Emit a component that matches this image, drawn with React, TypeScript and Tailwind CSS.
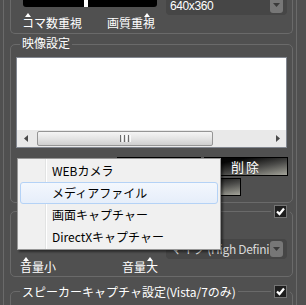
import React from "react";

const line = "border-[#6a6a6a]";

function Tri({ className = "" }: { className?: string }) {
  return (
    <svg width="6" height="4" viewBox="0 0 6 4" className={className}>
      <path d="M3 0 L6 4 L0 4 Z" fill="#fff" />
    </svg>
  );
}

function DownArrow() {
  return (
    <svg width="7" height="4" viewBox="0 0 7 4">
      <path d="M0 0 H7 L3.5 4 Z" fill="#3a3a3a" />
    </svg>
  );
}

function CheckBox() {
  return (
    <div className="w-[13px] h-[13px] border border-[#747474] bg-[#1e1e1e] flex items-center justify-center">
      <svg width="11" height="11" viewBox="0 0 11 11">
        <path d="M2 5.5 L4.5 8 L9 2.5" stroke="#fff" strokeWidth="2.2" fill="none" />
      </svg>
    </div>
  );
}

function GroupHeader({ label, check }: { label?: string; check?: boolean }) {
  return (
    <div className="-mt-[7px] flex items-center h-[13px]">
      {label && <span className="ml-[9px] px-[2px] bg-[#505050] leading-[12px]">{label}</span>}
      {check && (
        <div className="ml-auto mr-[2px] px-[3px] bg-[#505050]">
          <CheckBox />
        </div>
      )}
    </div>
  );
}

function DarkButton({ children, className = "" }: { children?: React.ReactNode; className?: string }) {
  return (
    <div
      className={`border border-black bg-[linear-gradient(to_bottom_right,#060606_25%,#4a4a48_60%,#a4a49a)] flex items-center justify-center text-[13px] tracking-[2px] text-white ${className}`}
    >
      {children}
    </div>
  );
}

function ScrollArrow({ dir }: { dir: "l" | "r" }) {
  return (
    <div className="w-[17px] flex items-center justify-center">
      <svg width="4" height="7" viewBox="0 0 4 7">
        <path d={dir === "l" ? "M4 0 V7 L0 3.5 Z" : "M0 0 V7 L4 3.5 Z"} fill="#4a4a4a" />
      </svg>
    </div>
  );
}

const items = ["WEBカメラ", "メディアファイル", "画面キャプチャー", "DirectXキャプチャー"];

export default function App() {
  return (
    <div className="relative w-[306px] h-[305px] overflow-hidden bg-[#505050] text-white text-[12px] leading-[12px] font-['Noto_Sans_CJK_JP',sans-serif]">
      <div className={`ml-[3px] w-[294px] h-full border-x ${line} pl-[6px] pr-[3px] flex flex-col`}>
        {/* 解像度・フレーム */}
        <div className={`border-x border-b ${line} rounded-b-[5px] pb-[4px] flex`}>
          <div className="flex flex-col">
            <div className="ml-[12px] w-[134px] h-[7px] bg-black rounded-b-[3px] flex">
              <div className="ml-[61px] w-[4px] h-[7px] bg-white" />
            </div>
            <div className="mt-[6px] flex">
              <div className="ml-[11px] w-[60px] flex flex-col">
                <Tri className="ml-[3px]" />
                <span>コマ数重視</span>
              </div>
              <div className="ml-[25px] flex flex-col">
                <Tri className="ml-[37px]" />
                <span>画質重視</span>
              </div>
            </div>
          </div>
          <div className="ml-auto mr-[5px] w-[121px] h-[15px] rounded-b-[4px] bg-[#464646] flex items-start">
            <span className="pl-[4px] pt-[1px] text-[12px] leading-[10px] tracking-[-0.4px] font-['Liberation_Sans',sans-serif]">
              640x360
            </span>
            <div className="ml-auto mr-[4px] w-[13px] h-[13px] rounded-b-[3px] bg-[#777] flex justify-center pt-[3px]">
              <DownArrow />
            </div>
          </div>
        </div>

        {/* 映像設定 */}
        <div className={`mt-[10px] border ${line} rounded-[5px] pb-[6px]`}>
          <div className="-mt-[8px] flex">
            <span className="ml-[9px] px-[2px] bg-[#505050] leading-[12px]">映像設定</span>
          </div>
          <div className="ml-[5px] mt-[8px] w-[271px] h-[91px] border border-[#828790] bg-white flex flex-col">
            <div className="flex-1" />
            <div className="h-[17px] bg-[#e9e9e9] flex">
              <ScrollArrow dir="l" />
              <div className="w-[3px]" />
              <div className="w-[176px] my-[1px] rounded-[2px] border border-[#959595] bg-[linear-gradient(to_bottom,#f5f5f5,#e4e4e4_50%,#cfcfcf)] flex items-center justify-center gap-[1px]">
                <div className="w-[1px] h-[7px] bg-[#6a6a6a]" />
                <div className="w-[1px] h-[7px] bg-[#fafafa]" />
                <div className="w-[1px] h-[7px] bg-[#6a6a6a]" />
                <div className="w-[1px] h-[7px] bg-[#fafafa]" />
                <div className="w-[1px] h-[7px] bg-[#6a6a6a]" />
                <div className="w-[1px] h-[7px] bg-[#fafafa]" />
              </div>
              <div className="flex-1" />
              <ScrollArrow dir="r" />
            </div>
          </div>
          <div className="mt-[9px] mr-[4px] flex justify-end gap-[3px]">
            <DarkButton className="w-[84px] h-[19px]" />
            <DarkButton className="w-[84px] h-[19px]">削除</DarkButton>
          </div>
          <div className="mt-[2px] mr-[51px] flex justify-end">
            <DarkButton className="w-[84px] h-[18px]" />
          </div>
        </div>

        {/* 音声 */}
        <div className={`mt-[8px] border ${line} rounded-[5px] pb-[3px]`}>
          <GroupHeader check />
          <div className="flex">
            <div className="flex flex-col">
              <div className="ml-[12px] mt-[22px] w-[134px] h-[6px] bg-black rounded-[3px]" />
              <div className="mt-[11px] flex">
                <div className="ml-[9px] w-[36px] flex flex-col">
                  <Tri className="ml-[3px]" />
                  <span>音量小</span>
                </div>
                <div className="ml-[66px] flex flex-col">
                  <Tri className="ml-[25px]" />
                  <span>音量大</span>
                </div>
              </div>
            </div>
            <div className="ml-auto mr-[5px] mt-[21px] w-[121px] h-[20px] rounded-[4px] bg-[#464646] flex items-center">
              <span className="pl-[4px] whitespace-nowrap text-[#d8d8d8] tracking-[-0.3px]">
                マイク (High Defini
              </span>
              <div className="ml-auto mr-[4px] w-[13px] h-[16px] rounded-[3px] bg-[#777] flex items-center justify-center">
                <DownArrow />
              </div>
            </div>
          </div>
        </div>

        {/* スピーカー */}
        <div className={`mt-[14px] border ${line} rounded-[5px] h-[40px] shrink-0`}>
          <GroupHeader label="スピーカーキャプチャ設定(Vista/7のみ)" check />
        </div>
      </div>

      {/* ソース追加メニュー */}
      <div className="absolute left-[17px] top-[158px] w-[204px] border border-[#979797] py-[1px] bg-[linear-gradient(to_right,#f0f0f0_27px,#e2e3e3_27px,#e2e3e3_28px,#ffffff_28px,#ffffff_29px,#f0f0f0_29px)] shadow-[2px_2px_2px_rgba(0,0,0,0.45)] text-black">
        {items.map((t, i) => (
          <div
            key={t}
            className={`mx-[2px] h-[22px] flex items-center pl-[31px] rounded-[3px] border ${
              i === 1
                ? "border-[#b4d2f6] bg-[linear-gradient(to_bottom,#f3f7fd,#e6eefa)]"
                : "border-transparent"
            }`}
          >
            {t}
          </div>
        ))}
      </div>
    </div>
  );
}
